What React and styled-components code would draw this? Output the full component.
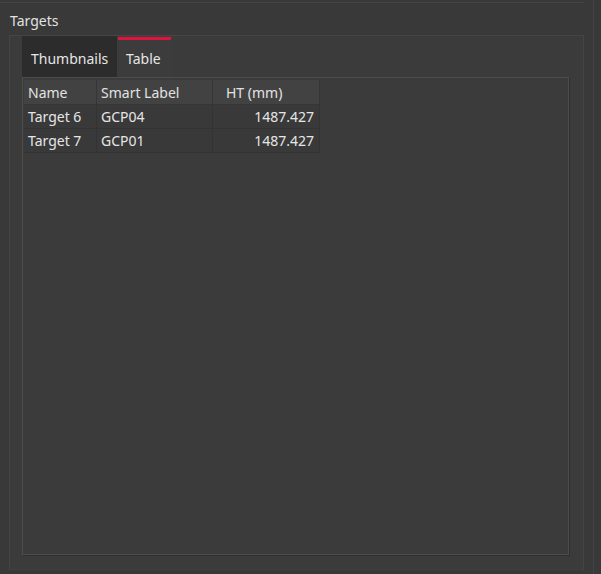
import React from "react";
import styled, { createGlobalStyle } from "styled-components";

const Global = createGlobalStyle`
  html, body { margin: 0; padding: 0; background: #393939; }
  body { font-family: "Noto Sans", "Open Sans", sans-serif; }
`;

const Root = styled.div`
  width: 601px;
  height: 574px;
  background: #393939;
  display: flex;
  overflow: hidden;
`;

const ScrollArea = styled.div`
  width: 593px;
  border-right: 1px solid #434343;
  display: flex;
  flex-direction: column;
`;

const Content = styled.div`
  width: 584px;
  display: flex;
  flex-direction: column;
  flex: 1;
`;

const PrevEdge = styled.div`
  height: 2px;
  border-bottom: 1px solid #444;
`;

const Title = styled.div`
  height: 32px;
  padding-left: 10px;
  font-size: 14px;
  color: #e2e2e2;
  display: flex;
  align-items: center;
  box-sizing: border-box;
  padding-top: 3px;
`;

const GroupBox = styled.div`
  margin-left: 9px;
  height: 535px;
  border: 1px solid #454545;
  border-bottom-color: #404040;
  background: #3b3b3b;
  box-sizing: border-box;
  padding: 0 14px 0 12px;
  display: flex;
  flex-direction: column;
`;

const TabBar = styled.div`
  height: 41px;
  display: flex;
  align-items: stretch;
`;

const Tab = styled.div`
  position: relative;
  padding: 4px 9px 0;
  width: ${p => p.$w}px;
  box-sizing: border-box;
  display: flex;
  align-items: center;
  font-size: 14px;
  color: #e6e6e6;
  background: ${p => (p.$hover ? "#2c2c2c" : "#3c3c3c")};
  ${p => p.$active && `
    &::before {
      content: "";
      position: absolute;
      top: 1px;
      left: 1px;
      right: 2px;
      height: 3px;
      background: #e0133f;
    }
  `}
`;

const Panel = styled.div`
  height: 478px;
  border: 1px solid #4c4c4c;
  box-shadow: 1px 1px 0 #2f2f2f;
  background: #3b3b3b;
  box-sizing: border-box;
  padding: 2px 0 0 1px;
`;

const Grid = styled.div`
  display: grid;
  grid-template-columns: 73px 116px 107px;
  width: max-content;
`;

const Head = styled.div`
  height: 25px;
  background: #424242;
  border-right: 1px solid #363636;
  border-bottom: 1px solid #363636;
  box-sizing: border-box;
  padding-left: ${p => p.$pl || 4}px;
  display: flex;
  align-items: center;
  font-size: 14px;
  color: #e2e2e2;
`;

const Cell = styled.div`
  height: 24px;
  background: #393939;
  border-right: 1px solid #333;
  border-bottom: 1px solid #333;
  box-sizing: border-box;
  padding: 0 5px 0 4px;
  display: flex;
  align-items: center;
  justify-content: ${p => (p.$right ? "flex-end" : "flex-start")};
  font-size: 14px;
  color: #e6e6e6;
`;

const rows = [
  ["Target 6", "GCP04", "1487.427"],
  ["Target 7", "GCP01", "1487.427"],
];

export default function App() {
  return (
    <>
      <Global />
      <Root>
        <ScrollArea>
          <Content>
            <PrevEdge />
            <Title>Targets</Title>
            <GroupBox>
              <TabBar>
                <Tab $w={95} $hover>Thumbnails</Tab>
                <Tab $w={56} $active>Table</Tab>
              </TabBar>
              <Panel>
                <Grid>
                  <Head $pl={4}>Name</Head>
                  <Head $pl={4}>Smart Label</Head>
                  <Head $pl={13}>HT (mm)</Head>
                  {rows.map((r, i) => (
                    <React.Fragment key={i}>
                      <Cell>{r[0]}</Cell>
                      <Cell>{r[1]}</Cell>
                      <Cell $right>{r[2]}</Cell>
                    </React.Fragment>
                  ))}
                </Grid>
              </Panel>
            </GroupBox>
          </Content>
        </ScrollArea>
      </Root>
    </>
  );
}
